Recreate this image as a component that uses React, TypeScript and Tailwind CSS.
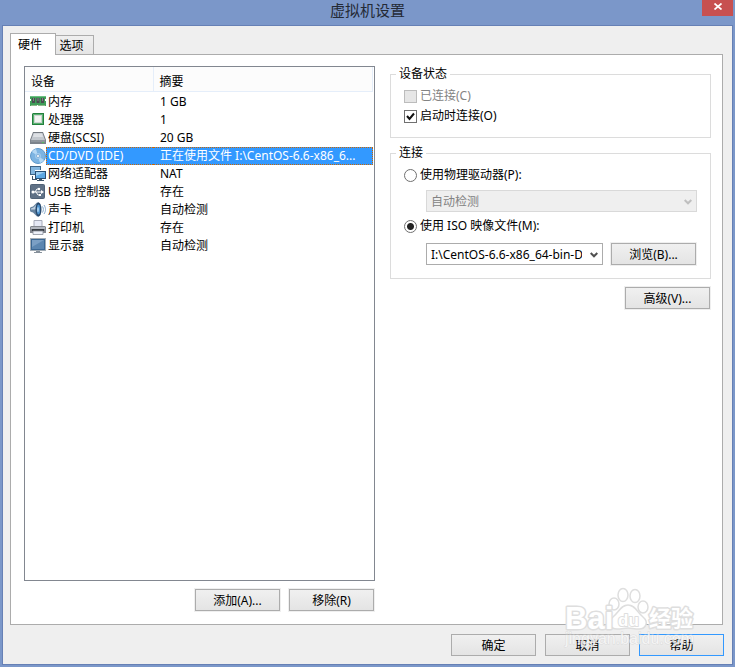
import { useState } from 'react'
import type { ReactNode } from 'react'

interface Device {
  name: string
  summary: string
  icon: ReactNode
}

function MemoryIcon() {
  return (
    <svg viewBox="0 0 16 16" className="h-4 w-4 shrink-0">
      <path d="M0 2h16v3h-1v2h1v5H0V7h1V5H0z" fill="#3f9d58" />
      <path d="M0 2h16v1H0z" fill="#6cc083" />
      <path d="M2 4h3v5H2zM6.500 4h3v5h-3zM11 4h3v5h-3z" fill="#4a4d50" />
      <path d="M3 4h1v3H3zM7.500 4h1v3h-1zM12 4h1v3h-1z" fill="#7e8386" />
      <path d="M1 11h14v1H1z" fill="#8db98b" />
      <path d="M7 11h1v1H7z" fill="#fff" />
    </svg>
  )
}

function CpuIcon() {
  return (
    <svg viewBox="0 0 16 16" className="h-4 w-4 shrink-0">
      <path d="M3 1h11v12H2V2z" fill="#23803d" />
      <path d="M3 2h10v10H3z" fill="#5bb173" />
      <path d="M4 3h8v8H4z" fill="#cdd5d0" />
      <path d="M5 4h6v6H5z" fill="#f1f3f1" />
    </svg>
  )
}

function DiskIcon() {
  return (
    <svg viewBox="0 0 16 16" className="h-4 w-4 shrink-0">
      <path d="M3 2h10l3 8v4H0v-4z" fill="#737980" />
      <path d="M3.500 3h9l2.500 7H1z" fill="#c3c8ce" />
      <path d="M4 3.500h8L13 7H3z" fill="#dde0e4" />
      <path d="M0 10h16v4H0z" fill="#7d848c" />
      <path d="M1 10.500h14v1H1z" fill="#a2a8af" />
      <path d="M12 12h2v1h-2z" fill="#56c15d" />
    </svg>
  )
}

function DiscIcon() {
  return (
    <svg viewBox="0 0 16 16" className="h-4 w-4 shrink-0">
      <circle cx="8" cy="8" r="7.500" fill="#7db4e2" stroke="#5e99cc" />
      <path d="M8 8 2 4a7 7 0 0 1 4-3zM8 8l6 4a7 7 0 0 1-4 3z" fill="#b5d8f3" />
      <circle cx="8" cy="8" r="3" fill="#9fcaee" />
      <circle cx="8" cy="8" r="1.500" fill="#fff" stroke="#5a91c2" strokeWidth=".6" />
    </svg>
  )
}

function NetworkIcon() {
  return (
    <svg viewBox="0 0 16 16" className="h-4 w-4 shrink-0">
      <path d="M0 0h11v9H0z" fill="#3d6386" />
      <path d="M1 1h9v7H1z" fill="#83b6df" />
      <path d="M2 10h1v3h4v1H2z" fill="#3f5468" />
      <path d="M5 4h11v9H5z" fill="#fff" />
      <path d="M5 5h11v8H5z" fill="#294f74" />
      <path d="M6 6h9v6H6z" fill="#5ca7e3" />
      <path d="M6 6h9l-9 4z" fill="#9bcdf2" />
      <path d="M9 13h3v1h2v1H7v-1h2z" fill="#40566b" />
    </svg>
  )
}

function UsbIcon() {
  return (
    <svg viewBox="0 0 16 16" className="h-4 w-4 shrink-0">
      <rect x="0.500" y="0.500" width="14" height="14" rx="1" fill="#5f7186" stroke="#506277" />
      <path d="M3 8h9M5 8l2-3h2M6 8l2 3h2" fill="none" stroke="#fff" />
      <path d="m11 6 3 2-3 2z" fill="#fff" />
      <circle cx="3" cy="8" r="1.500" fill="#fff" />
      <circle cx="9" cy="5" r="1.200" fill="#fff" />
      <path d="M9 10h2v2H9z" fill="#fff" />
    </svg>
  )
}

function SoundIcon() {
  return (
    <svg viewBox="0 0 16 16" className="h-4 w-4 shrink-0">
      <path d="M0 6c0-1 2-1 3-1.500L7 .5h2v14H7l-4-4C2 10 0 10 0 9z" fill="#66839f" />
      <path d="M1 6.500 3.500 5.500 7 2v5.500H1z" fill="#bfd0e0" />
      <ellipse cx="8.500" cy="7.500" rx="3" ry="7" fill="#27486c" />
      <ellipse cx="8.500" cy="7.500" rx="1.600" ry="5" fill="#4f94d0" />
      <ellipse cx="8" cy="7.500" rx=".8" ry="2.500" fill="#b9dbf4" />
      <path d="M12.500 4.500c1.200 2 1.200 4 0 6M14 3c2 3 2 6 0 9" fill="none" stroke="#86a9cb" />
    </svg>
  )
}

function PrinterIcon() {
  return (
    <svg viewBox="0 0 16 16" className="h-4 w-4 shrink-0">
      <path d="M4 .5h8V7H4z" fill="#e6e9f5" stroke="#a6aab8" />
      <path d="M1 6h14l1 1v6H0V7z" fill="#83878f" />
      <path d="M1 7h14v2H1z" fill="#b3b7bf" />
      <path d="M2 9h12v2H2z" fill="#383c43" />
      <path d="M3 11h10v3.500H3z" fill="#edf0f8" stroke="#8c919b" strokeWidth=".8" />
    </svg>
  )
}

function MonitorIcon() {
  return (
    <svg viewBox="0 0 16 16" className="h-4 w-4 shrink-0">
      <path d="M0 0h16v13H0z" fill="#a3adb6" />
      <path d="M1 1h14v11H1z" fill="#3b6794" />
      <path d="M2 2h12v9H2z" fill="#5c86b0" />
      <path d="M2 2h12L2 9z" fill="#7b9fc4" />
      <path d="M6 13h4v1h2v1H4v-1h2z" fill="#87919b" />
    </svg>
  )
}

const DEVICES: Device[] = [
  { name: '内存', summary: '1 GB', icon: <MemoryIcon /> },
  { name: '处理器', summary: '1', icon: <CpuIcon /> },
  { name: '硬盘(SCSI)', summary: '20 GB', icon: <DiskIcon /> },
  { name: 'CD/DVD (IDE)', summary: '正在使用文件 I:\\CentOS-6.6-x86_6...', icon: <DiscIcon /> },
  { name: '网络适配器', summary: 'NAT', icon: <NetworkIcon /> },
  { name: 'USB 控制器', summary: '存在', icon: <UsbIcon /> },
  { name: '声卡', summary: '自动检测', icon: <SoundIcon /> },
  { name: '打印机', summary: '存在', icon: <PrinterIcon /> },
  { name: '显示器', summary: '自动检测', icon: <MonitorIcon /> },
]

function Button({ children, primary = false }: { children: ReactNode; primary?: boolean }) {
  return (
    <button
      type="button"
      className={`h-[22px] w-[85px] shrink-0 border bg-linear-to-b from-[#f0f0f0] to-[#e4e4e4] pt-0.5 shadow-[0_0_0_1px_#efefef] ${
        primary ? 'border-[#3399ff]' : 'border-[#acacac]'
      }`}
    >
      {children}
    </button>
  )
}

function Select({ label, value, disabled = false }: { label: string; value: string; disabled?: boolean }) {
  return (
    <div className="relative min-w-0 flex-1">
      <select
        aria-label={label}
        disabled={disabled}
        className={`block h-[22px] w-full appearance-none border pt-0.5 pr-5 pl-1 opacity-100 ${
          disabled ? 'border-[#d9d9d9] bg-[#efefef] text-[#838383]' : 'border-[#acacac] bg-white'
        }`}
      >
        <option>{value}</option>
      </select>
      <svg
        viewBox="0 0 8 6"
        className={`pointer-events-none absolute top-[9px] right-[5px] h-1.5 w-2 ${disabled ? 'text-[#bfbfbf]' : 'text-[#505050]'}`}
      >
        <path d="m.7 1 3.300 3.300L7.300 1" fill="none" stroke="currentColor" strokeWidth="2" />
      </svg>
    </div>
  )
}

function Radio({ label, checked, onChange }: { label: string; checked: boolean; onChange: () => void }) {
  return (
    <label className="flex h-5 items-center gap-[3px]">
      <input
        type="radio"
        name="source"
        checked={checked}
        onChange={onChange}
        className="h-[13px] w-[13px] appearance-none rounded-full border border-[#707070] bg-white checked:bg-[radial-gradient(circle,#222_3px,#fff_4px)]"
      />
      {label}
    </label>
  )
}

function Watermark() {
  return (
    <svg
      viewBox="0 0 136 66"
      className="pointer-events-none absolute right-[37px] bottom-[17px] h-[66px] w-[136px]"
      fontFamily="'Liberation Sans', 'Noto Sans CJK SC', sans-serif"
      fontWeight="bold"
      aria-hidden="true"
    >
      <g fill="#fff" stroke="#dedede" strokeWidth="1.500">
        <ellipse cx="61" cy="11" rx="5" ry="6.500" />
        <ellipse cx="73" cy="12" rx="5" ry="6.500" />
        <ellipse cx="52" cy="20" rx="5" ry="6" />
        <ellipse cx="81" cy="23" rx="5" ry="6" />
        <path d="M66 21c-7 0-9 7-15 12-6 5-3 12 4 12 5 0 7-1 11-1s6 1 11 1c7 0 10-7 4-12-6-5-8-12-15-12z" />
      </g>
      <g fill="#fff" stroke="#dedede" strokeWidth="3" strokeLinejoin="round" paintOrder="stroke">
        <text x="3" y="45" fontSize="31">Bai</text>
        <text x="56" y="42" fontSize="17" strokeWidth="2">du</text>
        <text x="87" y="42" fontSize="22">经验</text>
      </g>
      <text x="3" y="60" fontSize="16" fontWeight="normal" fill="#fff" fillOpacity=".7" stroke="#d4d4d4" strokeOpacity=".7" paintOrder="stroke">
        jingyan.baidu.com
      </text>
    </svg>
  )
}

export default function App() {
  const [selected, setSelected] = useState(3)
  const [autoConnect, setAutoConnect] = useState(true)
  const [source, setSource] = useState<'drive' | 'iso'>('iso')

  return (
    <div className="relative flex min-h-screen flex-col bg-[#7b97c9] px-0.5 pb-0.5 font-['Noto_Sans','Noto_Sans_CJK_SC',sans-serif] text-[12px] leading-4 text-black">
      <header className="grid h-[25px] grid-cols-[1fr_auto_1fr] items-start">
        <h1 className="col-start-2 text-[15px] leading-5 text-[#242a35]">虚拟机设置</h1>
        <button type="button" aria-label="关闭" className="flex h-4 w-[31px] items-center justify-center justify-self-end bg-[#c75050] pb-1">
          <svg viewBox="0 0 8 7" className="h-[7px] w-2">
            <path d="m.5 .5 7 6m0-6-7 6" stroke="#fff" strokeWidth="1.700" />
          </svg>
        </button>
      </header>

      <main className="flex flex-1 flex-col border border-[#6680b5] bg-[#efefef] pt-[7px] pr-2 pb-2 pl-[7px]">
        <div role="tablist" className="flex h-[21px] items-end">
          <button type="button" role="tab" aria-selected="true" className="z-10 -mb-px h-[22px] w-[46px] border border-b-0 border-[#acacac] bg-white pr-1.5">
            硬件
          </button>
          <button type="button" role="tab" aria-selected="false" className="h-[19px] w-[38px] border border-b-0 border-l-0 border-[#acacac] bg-linear-to-b from-[#f0f0f0] to-[#e5e5e5] pt-0.5 pr-1.5">
            选项
          </button>
        </div>

        <section className="mr-px grid flex-1 grid-cols-[351fr_321fr] gap-[15px] border border-[#acacac] bg-white pt-[11px] pr-[11px] pb-[13px] pl-[13px]">
          {/* Device list */}
          <div className="flex min-w-0 flex-col">
            <div className="flex-1 border border-[#828790] pr-px">
              <table className="w-full table-fixed border-collapse text-left">
                <thead>
                  <tr className="h-[24px] border-b border-[#e5eefa] bg-[#fcfcfc]">
                    <th className="w-[128px] border-r border-[#e5eefa] p-0 pt-1.5 pl-1.5 font-normal">设备</th>
                    <th className="border-r border-[#e5eefa] p-0 pt-1.5 pl-1.5 font-normal">摘要</th>
                  </tr>
                </thead>
                <tbody>
                  <tr className="h-0.5"><td colSpan={2} className="p-0" /></tr>
                  {DEVICES.map((d, i) => (
                    <tr key={d.name} onClick={() => setSelected(i)} className="h-[18px] leading-4">
                      <td className="p-0 pl-[5px]">
                        <div className="flex items-center">
                          {d.icon}
                          <span className={`h-[18px] flex-1 border border-r-0 border-dotted pl-px ${i === selected ? 'border-[#cc6600] bg-[#3399ff] text-white' : 'border-transparent'}`}>
                            {d.name}
                          </span>
                        </div>
                      </td>
                      <td className="p-0">
                        <div className={`h-[18px] border border-l-0 border-dotted pl-[7px] whitespace-nowrap ${i === selected ? 'border-[#cc6600] bg-[#3399ff] text-white' : 'border-transparent'}`}>
                          {d.summary}
                        </div>
                      </td>
                    </tr>
                  ))}
                </tbody>
              </table>
            </div>
            <div className="mt-2 flex justify-end gap-[9px] pr-px">
              <Button>添加(A)...</Button>
              <Button>移除(R)</Button>
            </div>
          </div>

          {/* Device settings */}
          <div className="flex min-w-0 flex-col">
            <fieldset className="border border-[#dcdcdc] pt-1 pr-[13px] pb-[11px] pl-[13px]">
              <legend className="-ml-2 px-[3px]">设备状态</legend>
              <label className="flex h-5 items-center gap-[3px] text-[#838383]">
                <input type="checkbox" disabled className="h-[13px] w-[13px] appearance-none border border-[#bcbcbc] bg-[#e6e6e6]" />
                已连接(C)
              </label>
              <label className="flex h-5 items-center gap-[3px]">
                <span className="relative flex">
                  <input
                    type="checkbox"
                    checked={autoConnect}
                    onChange={() => setAutoConnect(!autoConnect)}
                    className="h-[13px] w-[13px] appearance-none border border-[#707070] bg-white"
                  />
                  {autoConnect && (
                    <svg viewBox="0 0 13 13" className="pointer-events-none absolute inset-0">
                      <path d="m3 6 2.500 3L10 3.500" fill="none" stroke="#111" strokeWidth="2" />
                    </svg>
                  )}
                </span>
                启动时连接(O)
              </label>
            </fieldset>

            <fieldset className="mt-[7px] border border-[#dcdcdc] pt-1 pr-[13px] pb-[13px] pl-[13px]">
              <legend className="-ml-2 px-[3px]">连接</legend>
              <Radio label="使用物理驱动器(P):" checked={source === 'drive'} onChange={() => setSource('drive')} />
              <div className="mt-[5px] ml-[22px] flex">
                <Select label="物理驱动器" value="自动检测" disabled />
              </div>
              <div className="mt-1">
                <Radio label="使用 ISO 映像文件(M):" checked={source === 'iso'} onChange={() => setSource('iso')} />
              </div>
              <div className="mt-[7px] ml-[22px] flex gap-2 pr-px">
                <Select label="ISO 映像文件" value="I:\CentOS-6.6-x86_64-bin-DVD1.iso" />
                <Button>浏览(B)...</Button>
              </div>
            </fieldset>

            <div className="mt-2 flex justify-end pr-px">
              <Button>高级(V)...</Button>
            </div>
          </div>
        </section>

        <footer className="mt-[9px] flex justify-end gap-[9px]">
          <Button>确定</Button>
          <Button>取消</Button>
          <Button primary>帮助</Button>
        </footer>
      </main>

      <Watermark />
    </div>
  )
}
